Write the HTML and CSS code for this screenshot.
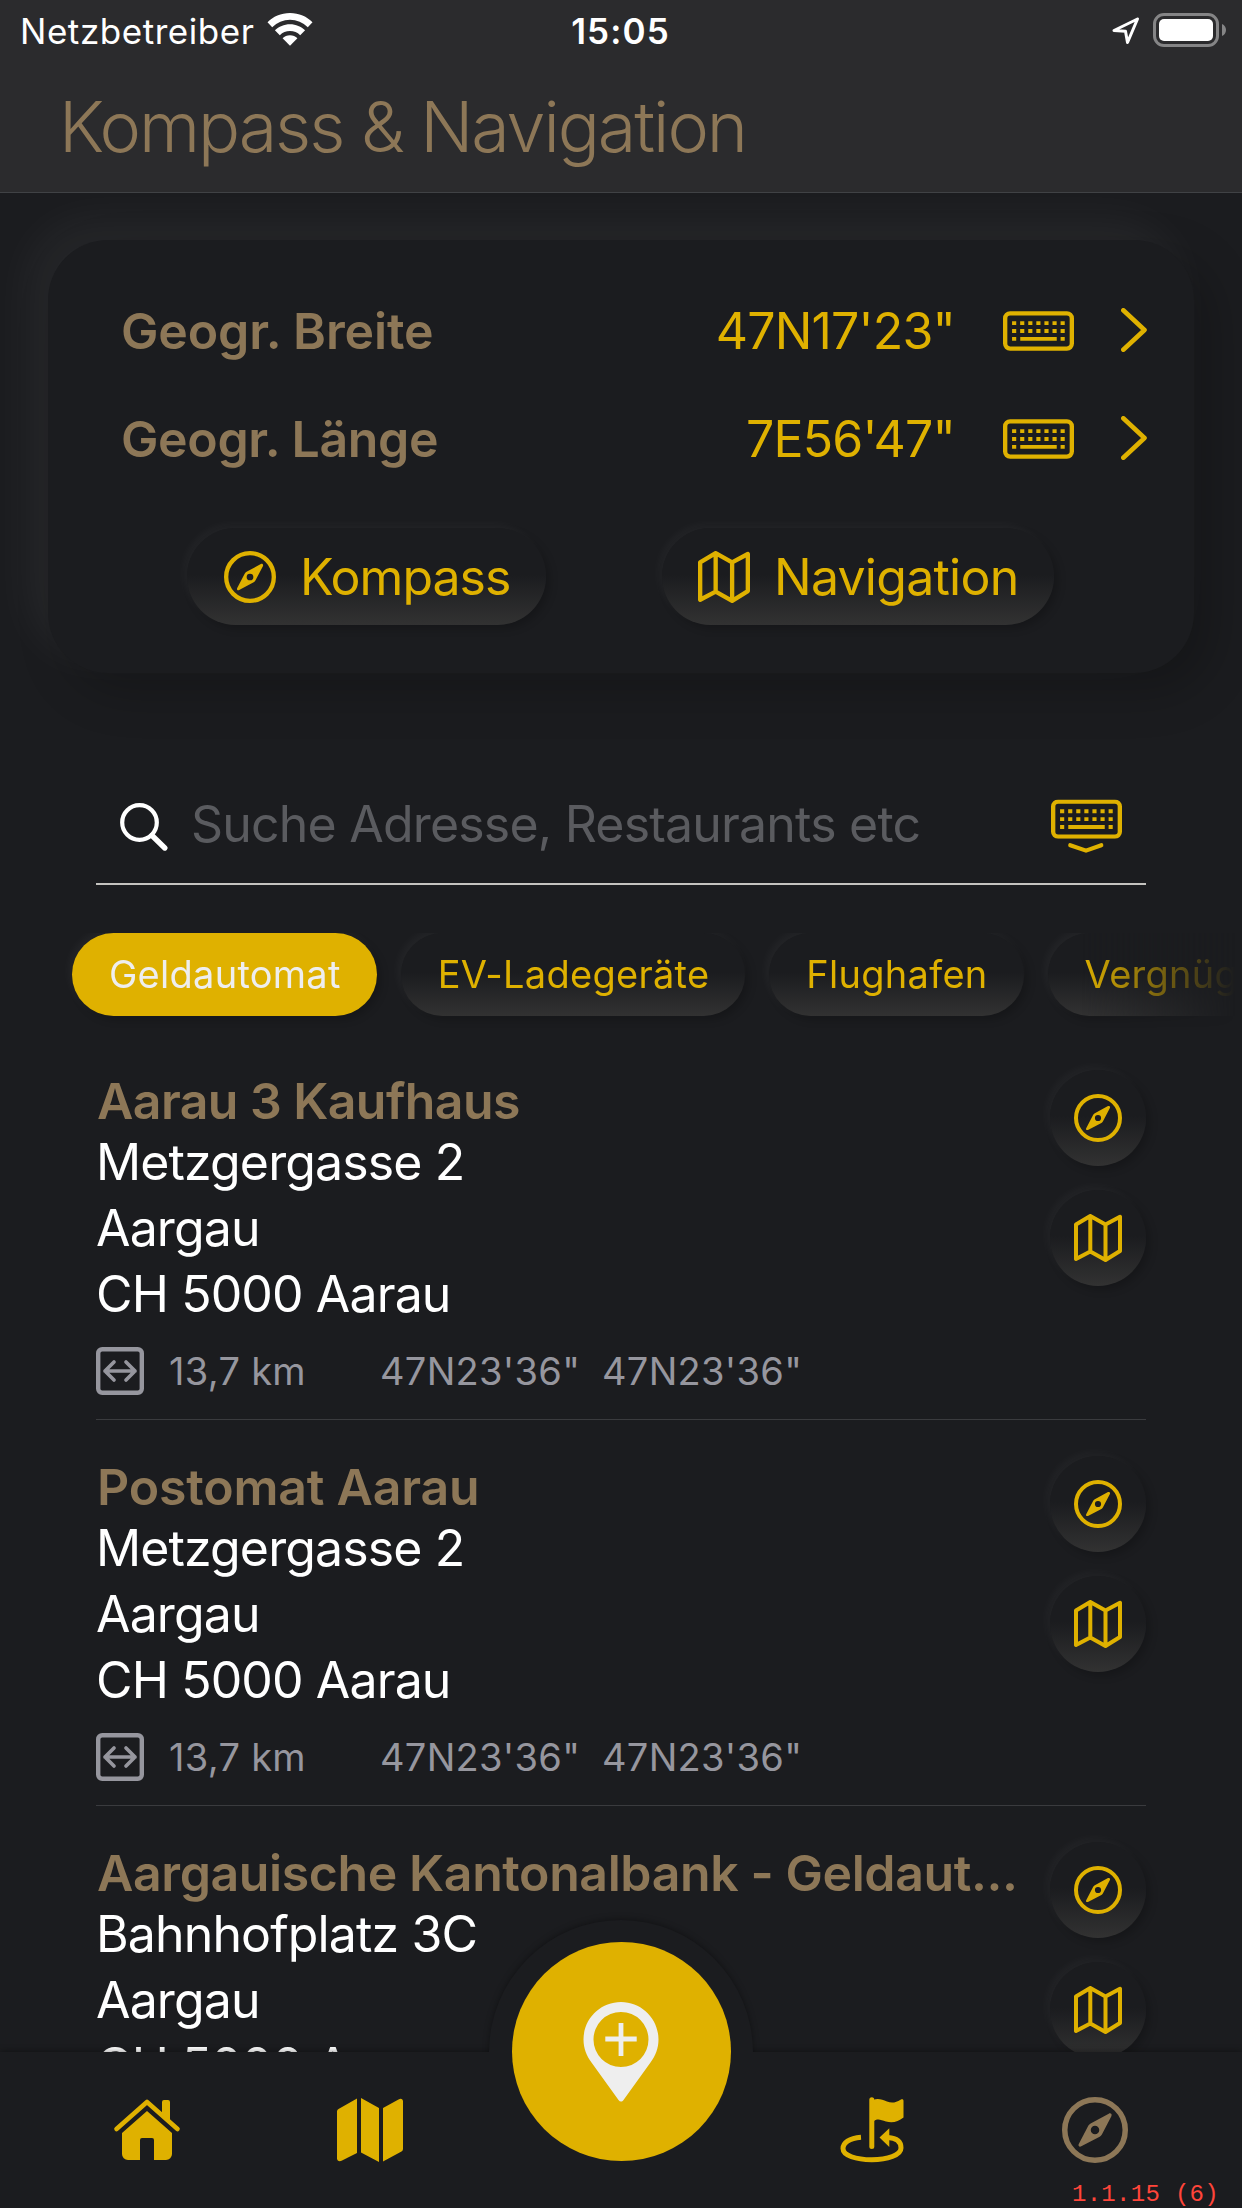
FILE: index.html
```html
<!DOCTYPE html>
<html lang="de">
<head>
<meta charset="utf-8">
<title>Kompass &amp; Navigation</title>
<link rel="stylesheet" href="styles.css">
</head>
<body>
<svg class="defs" aria-hidden="true">
  <symbol id="compass" viewBox="0 0 48 48">
    <circle cx="24" cy="24" r="22" fill="none" stroke="currentColor" stroke-width="4"/>
    <path fill="currentColor" fill-rule="evenodd" d="M12.2 34.2 19.2 20.8a4 4 0 0 1 1.6-1.6L34 12.1c1.4-.7 2.6.4 1.900 1.900L29 27.300a4 4 0 0 1-1.600 1.600L14 35.900c-1.400.7-2.500-.4-1.800-1.700ZM24 20.900a3.100 3.100 0 1 0 0 6.200 3.100 3.100 0 0 0 0-6.200Z"/>
  </symbol>
  <symbol id="map" viewBox="0 0 48 48">
    <path fill="none" stroke="currentColor" stroke-width="4" stroke-linejoin="round" d="M2 10.500 16.300 2 31.500 10.500 46 2.800V37L31.500 46 16.300 37.500 2 45ZM16.300 2V37.500M31.500 10.500V46"/>
  </symbol>
  <symbol id="keyboard" viewBox="0 0 72 40">
    <rect x="2.200" y="2.200" width="67.600" height="35.600" rx="5" fill="none" stroke="currentColor" stroke-width="4.400"/>
    <path stroke="currentColor" stroke-width="4" fill="none" d="M9.200 12H63M9.200 20H63" stroke-dasharray="4.200 4"/>
    <path stroke="currentColor" stroke-width="4" fill="none" d="M9.200 28H13.400M17.500 28H54.500M58.400 28H62.600"/>
  </symbol>
  <symbol id="chevron" viewBox="0 0 26 44">
    <path fill="none" stroke="currentColor" stroke-width="4.600" stroke-linecap="round" stroke-linejoin="round" d="M2.300 2.300 23.500 22 2.300 41.700"/>
  </symbol>
  <symbol id="distance" viewBox="0 0 48 48">
    <rect x="2.200" y="2.200" width="43.600" height="43.600" rx="4" fill="none" stroke="currentColor" stroke-width="4.400"/>
    <path fill="none" stroke="currentColor" stroke-width="3.700" stroke-linecap="round" stroke-linejoin="round" d="M9 24H39M18 15 9 24 18 33M30 15 39 24 30 33"/>
  </symbol>
</svg>

<div class="phone">
  <header class="header">
    <div class="status">
      <span class="status-left"><span class="carrier">Netzbetreiber</span>
        <svg class="wifi" viewBox="0 0 46 33" fill="#fff"><path d="M23 0C32 0 40 3.500 45.500 9.300L40.800 14.200A25 25 0 0 0 5.200 14.200L.5 9.300C6 3.500 14 0 23 0Z"/><path d="M23 11.200c5.900 0 11.200 2.300 15.100 6.100l-4.900 4.900a14.600 14.600 0 0 0-20.400 0l-4.900-4.900c3.900-3.800 9.200-6.100 15.100-6.100Z"/><path d="M23 22.300c2.900 0 5.500 1.100 7.400 2.900L23 32.800l-7.400-7.600c1.900-1.800 4.500-2.900 7.400-2.900Z"/></svg>
      </span>
      <span class="time">15:05</span>
      <span class="status-right">
        <svg class="arrow" viewBox="0 0 28 28"><path d="M25.500 2 2 13.500 13.500 14.300 15.500 25.500Z" fill="none" stroke="#fff" stroke-width="3" stroke-linejoin="round"/></svg>
        <svg class="battery" viewBox="0 0 73 34"><rect x="1.500" y="1.500" width="63" height="31" rx="9.500" fill="none" stroke="#858586" stroke-width="3"/><rect x="6" y="6" width="54" height="22" rx="5" fill="#fff"/><path d="M69 11c2.700 1.200 4 3.500 4 6s-1.300 4.800-4 6Z" fill="#858586"/></svg>
      </span>
    </div>
    <h1 class="title">Kompass &amp; Navigation</h1>
  </header>

  <section class="card">
    <div class="coord-row"><span class="coord-label">Geogr. Breite</span><span class="coord-value">47N17'23"</span><svg class="i-keyboard"><use href="#keyboard"/></svg><svg class="i-chevron"><use href="#chevron"/></svg></div>
    <div class="coord-row"><span class="coord-label tight">Geogr. Länge</span><span class="coord-value">7E56'47"</span><svg class="i-keyboard"><use href="#keyboard"/></svg><svg class="i-chevron"><use href="#chevron"/></svg></div>
    <div class="card-actions">
      <button class="pill compass-pill"><svg><use href="#compass"/></svg><span>Kompass</span></button>
      <button class="pill map-pill"><svg><use href="#map"/></svg><span>Navigation</span></button>
    </div>
  </section>

  <div class="search">
    <svg class="i-search" viewBox="0 0 48 48" fill="none" stroke="#fff" stroke-linecap="round"><circle cx="19.500" cy="19.500" r="17.300" stroke-width="4.200"/><path d="M32 32.500 44.800 45" stroke-width="5.400"/></svg>
    <span class="placeholder">Suche Adresse, Restaurants etc</span>
    <svg class="i-dismiss" viewBox="0 0 72 54"><use href="#keyboard" width="72" height="40"/><path d="M19.500 46.500 35.500 52 51 46.500" fill="none" stroke="currentColor" stroke-width="4.200" stroke-linecap="round" stroke-linejoin="round"/></svg>
  </div>

  <nav class="chips">
    <span class="chip active">Geldautomat</span>
    <span class="chip">EV-Ladegeräte</span>
    <span class="chip">Flughafen</span>
    <span class="chip">Vergnügungspark</span>
  </nav>

  <main class="list">
    <article class="item">
      <div class="info">
        <h2 class="name">Aarau 3 Kaufhaus</h2>
        <p class="line">Metzgergasse 2</p><p class="line">Aargau</p><p class="line">CH 5000 Aarau</p>
        <div class="meta"><svg><use href="#distance"/></svg><span class="km">13,7 km</span><span class="pos">47N23'36"</span><span class="pos">47N23'36"</span></div>
      </div>
      <div class="actions"><button class="round"><svg><use href="#compass"/></svg></button><button class="round"><svg><use href="#map"/></svg></button></div>
    </article>
    <article class="item">
      <div class="info">
        <h2 class="name postomat">Postomat Aarau</h2>
        <p class="line">Metzgergasse 2</p><p class="line">Aargau</p><p class="line">CH 5000 Aarau</p>
        <div class="meta"><svg><use href="#distance"/></svg><span class="km">13,7 km</span><span class="pos">47N23'36"</span><span class="pos">47N23'36"</span></div>
      </div>
      <div class="actions"><button class="round"><svg><use href="#compass"/></svg></button><button class="round"><svg><use href="#map"/></svg></button></div>
    </article>
    <article class="item">
      <div class="info">
        <h2 class="name bank">Aargauische Kantonalbank - Geldaut...</h2>
        <p class="line">Bahnhofplatz 3C</p><p class="line">Aargau</p><p class="line">CH 5000 Aarau</p>
      </div>
      <div class="actions"><button class="round"><svg><use href="#compass"/></svg></button><button class="round"><svg><use href="#map"/></svg></button></div>
    </article>
  </main>

  <footer class="tabbar">
    <span class="halo"></span><span class="tab-surface"></span>
    <svg class="tab home" viewBox="0 0 66 62"><path fill="none" stroke="currentColor" stroke-width="4.600" stroke-linecap="round" stroke-linejoin="round" d="M2.500 30 33 3 63.500 30"/><path fill="currentColor" d="M48 14V3a2 2 0 0 1 2-2h4a2 2 0 0 1 2 2V22ZM33 12 58 34V55a6 6 0 0 1-6 6H40V41a2 2 0 0 0-2-2H28a2 2 0 0 0-2 2V61H14a6 6 0 0 1-6-6V34Z"/></svg>
    <svg class="tab mapfill" viewBox="0 0 66 64" fill="currentColor"><path d="M0 13.500a3 3 0 0 1 1.500-2.600L20 .5V55L4.500 62.800C2 63.800 0 62.500 0 60.500ZM24 0 42 10V64L24 54.500ZM46 10 61.500 1.400C64 0 66 1 66 3.500V51a3 3 0 0 1-1.500 2.600L46 63.500Z"/></svg>
    <button class="fab"><svg viewBox="0 0 76 100"><path fill="#eee" fill-rule="evenodd" d="M38 0C58.700 0 75.500 16.800 75.500 37.500c0 9-3.200 16.500-8 23L40.500 98c-1.500 2-3.500 2-5 0L8.500 60.500c-4.800-6.500-8-14-8-23C.5 16.800 17.300 0 38 0Zm0 10a27.500 27.500 0 1 0 0 55 27.500 27.500 0 0 0 0-55Z"/><path stroke="#eee" stroke-width="4.800" d="M38 21V54M22.300 37H53.700"/></svg></button>
    <svg class="tab flag" viewBox="0 0 64 66"><path fill="none" stroke="currentColor" stroke-width="5" stroke-linecap="round" d="M31.800 2.800V49.500"/><path fill="currentColor" d="M33 3C38 1 42 2.500 47 4.500S56 5.500 60.500 2.700C62.500 1.700 63.500 2.300 63.500 4V20.500C58 24.500 53 26.500 46 24.500 41 23 38 21 34 24ZM39.500 40.500 49.300 31.300V50Z"/><path fill="none" stroke="currentColor" stroke-width="5" d="M21 40.200C9 41 3 46 3 51.500 3 58.500 16 62.700 31.800 62.700S61 58 61 51C61 44.500 57 41 48 40.500"/></svg>
    <svg class="tab compass-tab"><use href="#compass"/></svg>
    <span class="version">1.1.15 (6)</span>
  </footer>
</div>
</body>
</html>
```
FILE: styles.css
```css
* { box-sizing: border-box; }
body, h1, h2, p { margin: 0; }
body { background: #1b1c1f; font-family: Inter, "Liberation Sans", sans-serif; }
svg { display: block; flex: none; overflow: visible; }
button { border: 0; padding: 0; color: inherit; font: inherit; letter-spacing: inherit; }
.defs { width: 0; height: 0; position: absolute; }

.phone {
  width: 1242px; height: 2208px; overflow: hidden;
  display: flex; flex-direction: column;
  color: #dfb100; background: #1b1c1f;
}

/* Header */
.header { flex: none; height: 193px; background: #2b2b2d; border-bottom: 1px solid #404245; position: relative; z-index: 1; }
.status {
  height: 62px; padding: 0 16px 0 20px; color: #fff; font-size: 35px; line-height: 62px;
  display: grid; grid-template-columns: 1fr auto 1fr; align-items: center;
}
.status-left, .status-right { display: flex; align-items: center; }
.status-right { justify-content: flex-end; gap: 13px; }
.carrier { letter-spacing: .55px; }
.wifi { width: 46px; height: 33px; margin: -3px 0 0 13px; }
.time { font-weight: 600; letter-spacing: 1.1px; margin-left: -5px; }
.arrow { width: 28px; height: 28px; }
.battery { width: 73px; height: 34px; margin-top: -2px; }
.title { padding-left: 59px; font-size: 70px; font-weight: 300; line-height: 130px; letter-spacing: -2.05px; color: #8d7757; white-space: nowrap; }

/* Coordinates card */
.card {
  flex: none; height: 433px; margin: 47px 48px 0; padding: 37px 47px 0 73px;
  border-radius: 60px; background: #1b1c1f;
  box-shadow: -18px -18px 48px rgba(255, 255, 255, .055), 18px 18px 48px rgba(0, 0, 0, .22);
}
.coord-row { height: 108px; display: flex; align-items: center; font-size: 50px; }
.coord-label { flex: 1; font-weight: 600; color: #8d7757; letter-spacing: -.13px; }
.coord-label.tight { letter-spacing: -.35px; }
.coord-value { letter-spacing: -.8px; margin-right: 48px; }
.i-keyboard { width: 71px; height: 40px; margin-right: 47px; }
.i-chevron { width: 26px; height: 44px; margin-top: -2px; }
.card-actions { display: flex; gap: 116px; margin: 35px 0 0 66px; }
.pill, .round, .chip {
  background: linear-gradient(#1b1c1f 48%, #323232);
  box-shadow: -4px -4px 8px rgba(255, 255, 255, .035), 4px 4px 8px rgba(0, 0, 0, .2);
}
.pill { height: 97px; border-radius: 49px; padding-left: 36px; display: flex; align-items: center; font-size: 50px; }
.compass-pill { width: 359px; gap: 24px; letter-spacing: -1px; padding-left: 37px; }
.map-pill { width: 392px; gap: 24px; letter-spacing: -.75px; }
.pill svg { width: 52px; height: 52px; }

/* Search field */
.search { flex: none; height: 123px; margin: 89px 96px 0; padding: 0 24px; border-bottom: 2px solid #c4c3bf; display: flex; align-items: center; }
.i-search { width: 48px; height: 48px; margin-top: 8px; }
.placeholder { flex: 1; margin: 2px 0 0 23px; color: #5a5b5f; font-size: 50px; letter-spacing: -.8px; white-space: nowrap; }
.i-dismiss { width: 71px; height: 54px; margin-top: 6px; }

/* Category chips */
.chips {
  flex: none; height: 101px; margin-top: 48px; padding-left: 72px; overflow: hidden;
  display: flex; gap: 24px; align-items: flex-start;
  mask-image: linear-gradient(90deg, #000 1080px, transparent 1235px);
}
.chip { flex: none; height: 83px; border-radius: 42px; padding: 0 36px 0 37px; font-size: 38px; line-height: 83px; letter-spacing: .27px; }
.chip.active { background: #dfb100; color: #eee; }

/* Places */
.list { flex: 1; min-height: 0; overflow: hidden; padding: 0 96px; }
.item { height: 386px; padding-top: 39px; border-bottom: 1px solid #3a3b3e; display: flex; align-items: flex-start; justify-content: space-between; }
.name { margin-left: 1px; font-size: 50px; font-weight: 600; line-height: 56px; color: #8d7757; letter-spacing: -.58px; white-space: nowrap; }
.name.postomat { letter-spacing: -.2px; }
.name.bank { letter-spacing: -.4px; }
.line { font-size: 50px; line-height: 66px; letter-spacing: -.87px; color: #fff; }
.meta { height: 48px; margin-top: 20px; display: flex; align-items: center; color: #96969e; font-size: 38px; letter-spacing: .3px; }
.meta svg { width: 48px; height: 48px; }
.km { margin-left: 25px; width: 211px; }
.pos { width: 222px; }
.actions { margin-top: -3px; display: flex; flex-direction: column; gap: 24px; }
.round { width: 96px; height: 96px; border-radius: 50%; display: flex; align-items: center; justify-content: center; }
.round svg { width: 48px; height: 48px; }

/* Tab bar */
.tabbar {
  flex: none; height: 156px; position: relative; padding-left: 114px;
  display: flex; gap: 109px; align-items: flex-start;
  box-shadow: 0 -1px 6px rgba(0, 0, 0, .35);
}
.halo { position: absolute; left: 489px; top: -132px; width: 264px; height: 264px; border-radius: 50%; background: #1b1c1f; box-shadow: 0 -1px 6px rgba(0, 0, 0, .35); }
.tab-surface { position: absolute; inset: 0; background: #1b1c1f; }
.tab { position: relative; margin-top: 46px; width: 66px; height: 66px; }
.home { height: 62px; margin: 47px 48px 0 0; }
.mapfill { height: 64px; }
.flag { width: 64px; margin-top: 45px; }
.compass-tab { margin: 45px 0 0 49px; color: #8d7757; }
.fab { position: relative; flex: none; width: 219px; height: 219px; margin-top: -110px; border-radius: 50%; background: #dfb100; display: flex; justify-content: center; padding: 60px 2px 0 0; }
.fab svg { width: 76px; height: 100px; }
.version { position: absolute; right: 23px; bottom: 0; font: 24px/27px "Liberation Mono", monospace; letter-spacing: .3px; color: #ff453a; }
```
